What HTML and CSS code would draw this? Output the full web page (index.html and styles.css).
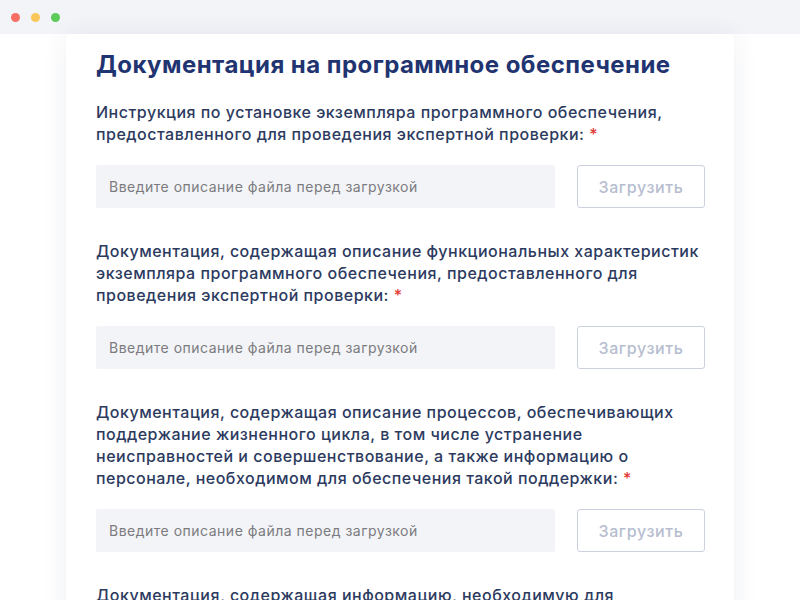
FILE: index.html
```html
<!DOCTYPE html>
<html lang="ru">
  <head>
    <meta charset="UTF-8" />
    <meta name="viewport" content="width=device-width, initial-scale=1.0" />
    <title>Документация на программное обеспечение</title>
    <link rel="stylesheet" href="styles.css">
  </head>
  <body>
    <div class="topbar">
      <span class="dot red"></span>
      <span class="dot yellow"></span>
      <span class="dot green"></span>
    </div>

    <div class="page">
      <div class="card">
        <h2>Документация на программное обеспечение</h2>

        <div class="field">
          <label>Инструкция по установке экземпляра программного обеспечения, предоставленного для проведения экспертной проверки: <span class="req">*</span></label>
          <div class="row">
            <input type="text" placeholder="Введите описание файла перед загрузкой" />
            <button class="upload">Загрузить</button>
          </div>
        </div>

        <div class="field">
          <label>Документация, содержащая описание функциональных характеристик экземпляра программного обеспечения, предоставленного для проведения экспертной проверки: <span class="req">*</span></label>
          <div class="row">
            <input type="text" placeholder="Введите описание файла перед загрузкой" />
            <button class="upload">Загрузить</button>
          </div>
        </div>

        <div class="field">
          <label>Документация, содержащая описание процессов, обеспечивающих поддержание жизненного цикла, в том числе устранение неисправностей и совершенствование, а также информацию о персонале, необходимом для обеспечения такой поддержки: <span class="req">*</span></label>
          <div class="row">
            <input type="text" placeholder="Введите описание файла перед загрузкой" />
            <button class="upload">Загрузить</button>
          </div>
        </div>

        <div class="field">
          <label>Документация, содержащая информацию, необходимую для эксплуатации экземпляра программного обеспечения: <span class="req">*</span></label>
          <div class="row">
            <input type="text" placeholder="Введите описание файла перед загрузкой" />
            <button class="upload">Загрузить</button>
          </div>
        </div>
      </div>
    </div>
  </body>
</html>
```

FILE: styles.css
```css
html,
body {
  margin: 0;
  padding: 0;
  background-color: #ffffff;
  font-family: Inter, "Noto Sans", Arial, sans-serif;
  overflow: hidden;
}

.topbar {
  height: 34px;
  background-color: #f3f4f8;
  display: flex;
  align-items: center;
  gap: 11px;
  padding-left: 11px;
}

.dot {
  width: 9px;
  height: 9px;
  border-radius: 50%;
}

.red {
  background-color: #f56f65;
}

.yellow {
  background-color: #fac659;
}

.green {
  background-color: #5ccb58;
}

.page {
  padding: 0 66px;
}

.card {
  background-color: white;
  box-shadow: 0 0 24px rgba(30, 40, 80, 0.07);
  padding: 16px 28px 40px 30px;
  min-height: 600px;
}

.card h2 {
  margin: 0 0 21px 0;
  font-size: 24px;
  line-height: 30px;
  font-weight: 700;
  color: #1f3471;
  letter-spacing: 0.45px;
}

.field {
  margin-bottom: 32px;
}

.field label {
  display: block;
  font-size: 16px;
  line-height: 22px;
  font-weight: 500;
  color: #2c3a60;
  letter-spacing: 0.5px;
  margin-bottom: 20px;
}

.req {
  color: #e53935;
}

.row {
  display: flex;
  gap: 22px;
}

.row input[type="text"] {
  width: 459px;
  height: 43px;
  box-sizing: border-box;
  border: none;
  border-radius: 2px;
  background-color: #f3f4f7;
  padding: 0 13px;
  font-family: inherit;
  font-size: 14px;
  letter-spacing: 0.5px;
  color: #333;
}

.row input::placeholder {
  color: #7b7b80;
}

.upload {
  width: 128px;
  height: 43px;
  box-sizing: border-box;
  background-color: white;
  border: 1px solid #cbd1de;
  border-radius: 3px;
  font-family: inherit;
  font-size: 16px;
  font-weight: 500;
  letter-spacing: 0.6px;
  color: #b6bdcf;
}
```
